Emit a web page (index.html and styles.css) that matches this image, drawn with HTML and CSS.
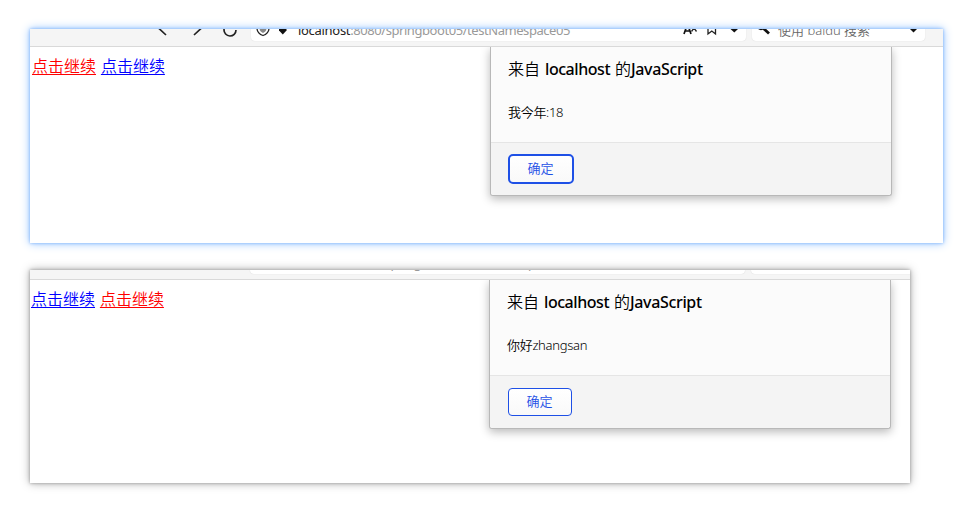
FILE: index.html
```html
<!DOCTYPE html>
<html lang="zh-CN">
<head>
<meta charset="utf-8">
<title>JavaScript</title>
<link rel="stylesheet" href="styles.css">
</head>
<body>
<section class="window focused">
  <div class="toolbar">
    <div class="bar">
      <svg class="nav" width="90" height="28" viewBox="0 0 90 28"><path d="M11 9 L4 16 L11 22.500 M39 9.500 L46 16 L39 22.500" transform="translate(0 -.5)" /><path d="M75.500 11 A6 6 0 1 0 81 17" /></svg>
      <div class="field address">
        <svg width="40" height="28" viewBox="0 0 40 28"><path class="line" d="M6 11 L12 9 L18 11 V15 C18 19 15 21.500 12 22.500 C9 21.500 6 19 6 15Z"/><path class="gray" d="M8.500 12H15.500V15C15.500 18 14 19 12 20C10 19 8.500 18 8.500 15Z"/><path class="solid" d="M28 16 H35.500 V17.500 L31.800 21.500 L28 17.500Z"/></svg>
        <span class="url"><b>localhost</b>:8080/springboot05/testNamespace05</span>
        <svg class="tools" width="66" height="28" viewBox="0 0 66 28"><path class="heavy" d="M4 21 L7.500 11 L11 21 M5.500 18H9.500"/><path class="line" d="M11.500 18.500 L14 15 L16.500 18.500"/><path class="line" d="M28 10H35.500V21L31.800 18L28 21Z"/><path class="solid" d="M50.500 16H58L54.300 19.500Z"/></svg>
      </div>
      <div class="field search">
        <svg width="26" height="28" viewBox="0 0 26 28"><circle class="heavy" cx="9" cy="13" r="3.300"/><path class="heavy thick" d="M11 15 L17 20.500"/></svg>
        <span class="hint">使用 baidu 搜索</span>
        <svg class="tools" width="20" height="28" viewBox="0 0 20 28"><path class="solid" d="M5 16H12L8.500 19.500Z"/></svg>
      </div>
    </div>
  </div>
  <main class="page">
    <nav class="links"><a class="red" href="#">点击继续</a> <a href="#">点击继续</a></nav>
    <div class="dialog">
      <div class="content">
        <h1><i>来自</i> <span class="host">localhost</span> <i>的</i><span class="js">JavaScript</span></h1>
        <p>我今年:18</p>
      </div>
      <footer><button>确定</button></footer>
    </div>
  </main>
</section>
<section class="window second">
  <div class="toolbar">
    <div class="bar">
      <div class="field address">
        <span class="url"><b>localhost</b>:8080/springboot05/testNamespace05</span>
      </div>
      <div class="field search"></div>
    </div>
  </div>
  <main class="page">
    <nav class="links"><a href="#">点击继续</a> <a class="red" href="#">点击继续</a></nav>
    <div class="dialog">
      <div class="content">
        <h1><i>来自</i> <span class="host">localhost</span> <i>的</i><span class="js">JavaScript</span></h1>
        <p>你好zhangsan</p>
      </div>
      <footer><button>确定</button></footer>
    </div>
  </main>
</section>
</body>
</html>
```
FILE: styles.css
```css
* { box-sizing: border-box; }
body {
  margin: 0;
  padding: 29px 0 0 30px;
  height: 509px;
  overflow: hidden;
  background: #fff;
  color: #000;
  font-family: "Noto Sans", "Noto Sans CJK SC", sans-serif;
}
.window { width: 913px; height: 214px; background: #fff; box-shadow: 0 0 3px #7db4fb, 0 0 9px #8fbffd; }
.second { width: 880px; height: 213px; margin-top: 27px; box-shadow: 0 0 3px #999, 0 0 9px #aaa; }
.toolbar {
  display: flex;
  align-items: flex-end;
  height: 18px;
  overflow: hidden;
  background: #f5f5f5;
  border-bottom: 1px solid #d9d9d9;
}
.second .toolbar { height: 10px; }
.bar { display: flex; flex: none; width: 895px; height: 28px; margin-bottom: 5px; gap: 6px; }
.second .bar { margin: 0 0 5px -1px; }
.nav { margin: 0 6px 0 125px; flex: none; fill: none; stroke: #222; stroke-width: 1.7; }
.bar > .nav + .address { margin-left: -6px; }
.field { display: flex; align-items: center; background: #fff; border-radius: 4px; box-shadow: 0 0 1px #ccc; }
.address { width: 495px; flex: none; }
.second .address { margin-left: 221px; padding-left: 40px; }
.search { width: 173px; flex: none; }
.field svg { flex: none; }
.tools { margin-left: auto; }
.line { fill: none; stroke: #222; stroke-width: 1.3; }
.heavy { fill: none; stroke: #111; stroke-width: 1.7; }
.thick { stroke-width: 2.8; }
.solid { fill: #111; }
.gray { fill: #888; }
.url { padding-left: 7px; font-size: 13px; line-height: 18px; margin-top: 6px; color: #999; white-space: nowrap; letter-spacing: -.44px; }
.url b { font-weight: 400; color: #222; letter-spacing: -.3px; }
.hint { font-size: 13px; line-height: 18px; margin-top: 6px; color: #666; white-space: nowrap; font-weight: 350; }
.page { display: flex; justify-content: space-between; align-items: flex-start; padding: 0 51px 0 2px; }
.second .page { padding: 0 19px 0 1px; }
.links { padding-top: 7px; font-size: 16px; line-height: 24px; font-weight: 350; word-spacing: .7px; }
.links a { color: #00f; text-decoration: underline; text-decoration-thickness: 1px; text-underline-offset: 2px; }
.links .red { color: #f00; }
.dialog {
  width: 402px;
  height: 149px;
  background: #fbfbfb;
  border: 1px solid #b8b8b8;
  border-top: 0;
  border-radius: 0 0 3px 3px;
  box-shadow: 0 3px 10px rgba(0, 0, 0, .28);
  clip-path: inset(0 -20px -25px -20px);
}
.content { height: 95px; padding: 10px 17px 0; }
h1 { display: flex; gap: 5px; margin: 0; font-size: 16px; line-height: 25px; font-weight: 500; white-space: nowrap; }
h1 i { font-style: normal; font-weight: 350; }
.host { width: 65px; letter-spacing: -.45px; }
.js { margin-left: -5px; letter-spacing: -.35px; }
p { margin: 20px 0 0; font-size: 13px; line-height: 20px; font-weight: 350; letter-spacing: -.3px; }
footer { height: 53px; padding: 12px 17px; background: #f4f4f4; border-top: 1px solid #e5e5e5; border-radius: 0 0 3px 3px; }
button {
  display: block;
  width: 66px;
  height: 30px;
  margin: 0;
  padding: 0 1px 2px 0;
  background: linear-gradient(#fff, #f9f9f9);
  border: 2px solid #1e50e6;
  border-radius: 5px;
  color: #1e50e6;
  font: 350 13px/22px "Noto Sans CJK SC", sans-serif;
}
.focused footer { padding-top: 11px; }
.second button { width: 64px; height: 28px; border-width: 1px; border-radius: 4px; margin-left: 1px; }
```
